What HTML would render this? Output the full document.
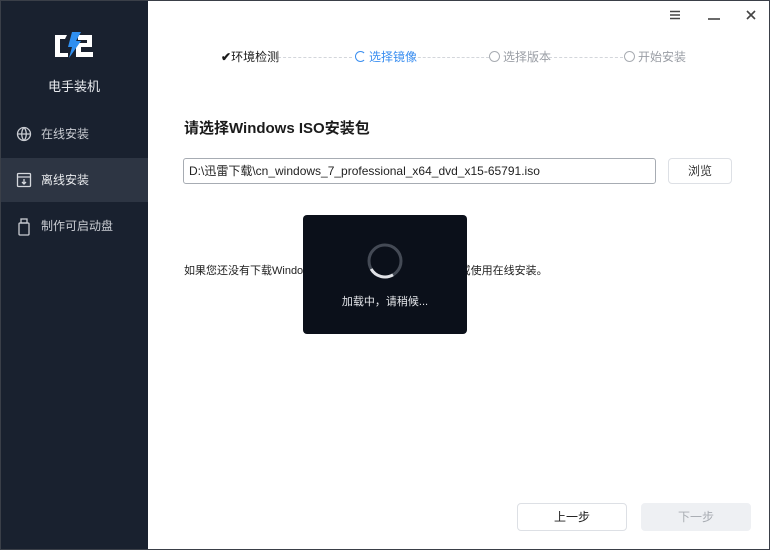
<!DOCTYPE html>
<html><head><meta charset="utf-8"><style>
*{margin:0;padding:0;box-sizing:border-box}
body{width:770px;height:550px;overflow:hidden;background:#fff;font-family:"Liberation Sans","Noto Sans CJK SC",sans-serif;position:relative}
.frame{position:absolute;inset:0;border:1px solid #3a3f48;pointer-events:none;z-index:10}
.side{position:absolute;left:0;top:0;width:148px;height:550px;background:#19212f}
.logo{position:absolute;left:54px;top:32px}
.brand{position:absolute;left:0;width:148px;top:76px;text-align:center;color:#e8eaee;font-size:13px}
.item{position:absolute;left:0;width:148px;height:44px;color:#c9ccd2;font-size:12px;line-height:44px;padding-left:41px}
.item.act{background:#2d3543;color:#e9ebee}
.item svg{position:absolute;left:16px;top:14px}
.steps{position:absolute;top:49px;font-size:12px;line-height:16px}
.dash{position:absolute;top:57px;border-top:1px dashed #d3d6db;height:0}
.circ{display:inline-block;width:11px;height:11px;border:1.5px solid #a8acb2;border-radius:50%;vertical-align:-1px;margin-right:3px}
h1{position:absolute;left:184px;top:117px;font-size:15px;font-weight:bold;color:#1b1b1b}
.input{position:absolute;left:183px;top:158px;width:473px;height:26px;border:1px solid #a7acb3;border-radius:3px;font-size:12px;line-height:24px;padding-left:5px;color:#222}
.btn{position:absolute;border:1px solid #dde0e5;border-radius:4px;text-align:center;font-size:12px;color:#333}
.tip{position:absolute;left:184px;top:262px;font-size:11px;color:#222}
.toast{position:absolute;left:303px;top:215px;width:164px;height:119px;background:#0b101a;border-radius:4px}
.toast div{position:absolute;left:0;width:164px;top:78px;text-align:center;color:#e4e6ea;font-size:11px}
</style></head><body>
<div class="side">
 <svg class="logo" width="40" height="28" viewBox="0 0 40 28">
  <path d="M1 3h12l-2 4H6v14h8v4H1z" fill="#fff"/>
  <path d="M24 3h14v12H27v5h12v5H22V11h11V8h-9z" fill="#fff"/>
  <path d="M18 0h9l-5 9h5L15 26l3-11h-4z" fill="#2f8ff0"/>
 </svg>
 <div class="brand">电手装机</div>
 <div class="item" style="top:112px"><svg width="16" height="16" viewBox="0 0 16 16" fill="none" stroke="#c9ccd2" stroke-width="1.3"><circle cx="8" cy="8" r="6.5"/><path d="M1.5 8h13M8 1.5c-3 3-3 10 0 13M8 1.5c3 3 3 10 0 13"/></svg>在线安装</div>
 <div class="item act" style="top:158px"><svg width="16" height="16" viewBox="0 0 16 16" fill="none" stroke="#d5d8dd" stroke-width="1.3"><rect x="1.5" y="1.5" width="13" height="13" rx="1"/><path d="M1.5 5h13M8 7v5M6 10l2 2 2-2"/></svg>离线安装</div>
 <div class="item" style="top:204px"><svg width="16" height="18" viewBox="0 0 16 18" fill="none" stroke="#c9ccd2" stroke-width="1.3"><rect x="5" y="1" width="6" height="4"/><rect x="3" y="5" width="10" height="12" rx="1"/></svg>制作可启动盘</div>
</div>
<svg style="position:absolute;left:669px;top:10px" width="12" height="10"><path d="M1 1.5h10M1 5h10M1 8.5h10" stroke="#444" stroke-width="1.6"/></svg>
<svg style="position:absolute;left:708px;top:16px" width="12" height="6"><path d="M0 3h12" stroke="#444" stroke-width="1.6"/></svg>
<svg style="position:absolute;left:746px;top:10px" width="10" height="10"><path d="M1 1l8 8M9 1l-8 8" stroke="#444" stroke-width="1.6"/></svg>

<div class="dash" style="left:278px;width:74px"></div>
<div class="dash" style="left:413px;width:76px"></div>
<div class="dash" style="left:549px;width:74px"></div>
<div class="steps" style="left:221px;color:#1b1b1b"><span style="font-weight:bold">✔</span>环境检测</div>
<div class="steps" style="left:355px;color:#3a8ef0"><span class="circ" style="border-color:#3a8ef0;border-right-color:transparent"></span>选择镜像</div>
<div class="steps" style="left:489px;color:#9a9ea5"><span class="circ"></span>选择版本</div>
<div class="steps" style="left:624px;color:#9a9ea5"><span class="circ"></span>开始安装</div>

<h1>请选择Windows ISO安装包</h1>
<div class="input">D:\迅雷下载\cn_windows_7_professional_x64_dvd_x15-65791.iso</div>
<div class="btn" style="left:668px;top:158px;width:64px;height:26px;line-height:24px">浏览</div>
<div class="tip">如果您还没有下载Windows ISO镜像，请先下载镜像文件或使用在线安装。</div>
<div class="toast">
 <svg style="position:absolute;left:63px;top:27px" width="38" height="38" viewBox="0 0 38 38"><circle cx="19" cy="19" r="16" fill="none" stroke="#444a55" stroke-width="3"/><path d="M19 3A16 16 0 0 1 35 19" fill="none" stroke="#e0e2e6" stroke-width="3" transform="rotate(150 19 19)"/></svg>
 <div>加载中，请稍候...</div>
</div>
<div class="btn" style="left:517px;top:503px;width:110px;height:28px;line-height:26px;color:#222">上一步</div>
<div class="btn" style="left:641px;top:503px;width:110px;height:28px;line-height:26px;background:#eef0f3;border-color:#eef0f3;color:#a9adb3">下一步</div>
<div class="frame"></div>
</body></html>
